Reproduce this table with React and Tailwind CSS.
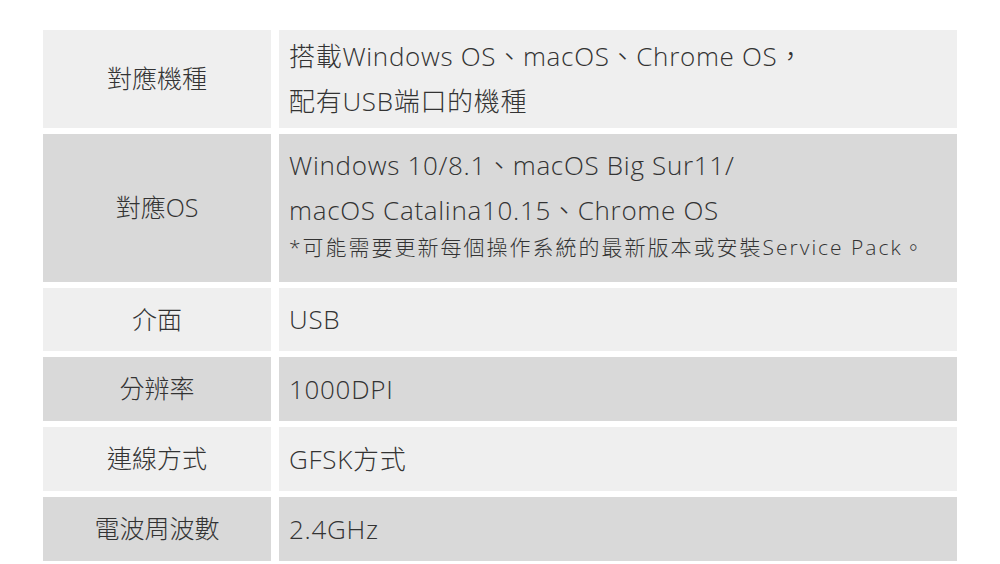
const rows = [
  {
    label: '對應機種',
    lines: ['搭載Windows OS、macOS、Chrome OS，', '配有USB端口的機種'],
    light: true,
    h: 'h-[98px] justify-center',
  },
  {
    label: '對應OS',
    lines: ['Windows 10/8.1、macOS Big Sur11/', 'macOS Catalina10.15、Chrome OS'],
    note: '*可能需要更新每個操作系統的最新版本或安裝Service Pack。',
    light: false,
    h: 'h-[148px] justify-start pt-[9px]',
  },
  { label: '介面', lines: ['USB'], light: true, h: 'h-[63px] justify-center' },
  { label: '分辨率', lines: ['1000DPI'], light: false, h: 'h-[64px] justify-center' },
  { label: '連線方式', lines: ['GFSK方式'], light: true, h: 'h-[64px] justify-center' },
  { label: '電波周波數', lines: ['2.4GHz'], light: false, h: 'h-[64px] justify-center' },
];

export default function App() {
  return (
    <div
      className="w-[1000px] h-[564px] bg-white px-[43px] pt-[30px] text-[#333333] font-light"
      style={{ fontFamily: '"Open Sans", "Noto Sans CJK TC", sans-serif' }}
    >
      <div className="flex flex-col gap-[6px]">
        {rows.map((r) => (
          <div key={r.label} className="flex gap-[8px]">
            <div
              className={`w-[228px] shrink-0 flex items-center justify-center text-[25px] ${
                r.light ? 'bg-[#efefef]' : 'bg-[#d9d9d9]'
              }`}
            >
              {r.label}
            </div>
            <div
              className={`flex-1 flex flex-col pl-[10px] ${r.h} ${
                r.light ? 'bg-[#efefef]' : 'bg-[#d9d9d9]'
              }`}
            >
              {r.lines.map((l) => (
                <p key={l} className="text-[26px] leading-[45px] tracking-[0.7px]">
                  {l}
                </p>
              ))}
              {r.note && (
                <p className="text-[21px] leading-[28px] tracking-[2px]">{r.note}</p>
              )}
            </div>
          </div>
        ))}
      </div>
    </div>
  );
}
